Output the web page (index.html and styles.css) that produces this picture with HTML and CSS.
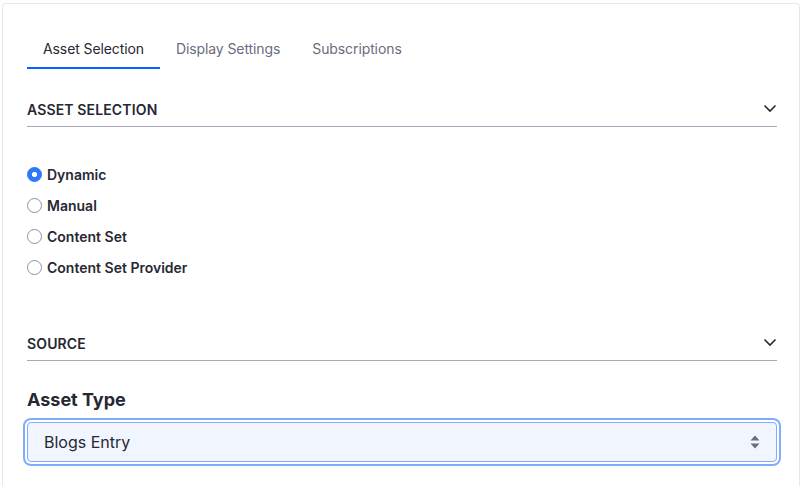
FILE: index.html
```html
<!DOCTYPE html>
<html lang="en">
<head>
<meta charset="utf-8">
<link rel="stylesheet" href="styles.css">
</head>
<body>
<div class="card">
  <nav class="tabs">
    <a class="tab active">Asset Selection</a>
    <a class="tab">Display Settings</a>
    <a class="tab">Subscriptions</a>
  </nav>

  <div class="sheet-header first">
    <span class="sheet-title">Asset Selection</span>
    <svg class="chev" width="14" height="14" viewBox="0 0 14 14"><path d="M1.5 4.5 L7 10 L12.5 4.5" fill="none" stroke="#272833" stroke-width="1.6"/></svg>
  </div>

  <div class="radios">
    <label class="radio"><span class="dot checked"></span><span>Dynamic</span></label>
    <label class="radio"><span class="dot"></span><span>Manual</span></label>
    <label class="radio"><span class="dot"></span><span>Content Set</span></label>
    <label class="radio"><span class="dot"></span><span>Content Set Provider</span></label>
  </div>

  <div class="sheet-header second">
    <span class="sheet-title">Source</span>
    <svg class="chev" width="14" height="14" viewBox="0 0 14 14"><path d="M1.5 4.5 L7 10 L12.5 4.5" fill="none" stroke="#272833" stroke-width="1.6"/></svg>
  </div>

  <div class="field">
    <div class="field-label">Asset Type</div>
    <div class="select">
      <span>Blogs Entry</span>
      <svg width="12" height="16" viewBox="0 0 12 16"><path d="M6 1.5 L10.5 6.5 H1.5 Z M6 14.5 L10.5 9.5 H1.5 Z" fill="#6b6c7e"/></svg>
    </div>
  </div>
</div>
</body>
</html>
```
FILE: styles.css
```css
* { box-sizing: border-box; }
html, body { margin: 0; padding: 0; background: #fff; }
body {
  font-family: Inter, "Noto Sans", "Liberation Sans", sans-serif;
  color: #272833;
  padding: 3px 5px 0 2px;
}
.card {
  border: 1px solid #e7e7ed;
  border-bottom: none;
  border-radius: 4px 4px 0 0;
  padding: 24px 22px 40px 24px;
  height: 520px;
}
.tabs {
  display: flex;
}
.tab {
  font-size: 14px;
  line-height: 20px;
  padding: 11px 16px 8px;
  color: #6b6c7e;
  letter-spacing: -0.1px;
  border-bottom: 2px solid transparent;
}
.tab.active {
  color: #272833;
  border-bottom-color: #0b5fff;
}
.sheet-header {
  display: flex;
  justify-content: space-between;
  align-items: center;
  border-bottom: 1px solid #a7a9bc;
  padding-bottom: 6px;
}
.sheet-header.first { margin-top: 31px; }
.sheet-header.second { margin-top: 56px; }
.sheet-title {
  font-size: 14px;
  line-height: 20px;
  font-weight: 600;
  text-transform: uppercase;
  letter-spacing: 0.01em;
}
.chev { position: relative; top: -2px; }
.radios {
  display: flex;
  flex-direction: column;
  gap: 10px;
  margin-top: 37px;
}
.radio {
  display: flex;
  align-items: center;
  gap: 5px;
  font-size: 14px;
  line-height: 21px;
  font-weight: 600;
}
.dot {
  width: 15px;
  height: 15px;
  border-radius: 50%;
  border: 1px solid #8f909c;
  background: #fff;
}
.dot.checked {
  border-color: #2e79f5;
  background: #2e79f5 radial-gradient(circle, #fff 0 2.4px, transparent 2.9px);
}
.field { margin-top: 27px; }
.field-label {
  font-size: 18px;
  line-height: 24px;
  font-weight: 700;
  margin-bottom: 10px;
}
.select {
  display: flex;
  justify-content: space-between;
  align-items: center;
  height: 40px;
  padding: 0 15px 0 16px;
  border: 1px solid #80acff;
  border-radius: 4px;
  background: #f0f5ff;
  box-shadow: 0 0 0 2px #fff, 0 0 0 4px #80acff;
  font-size: 16px;
}
```
